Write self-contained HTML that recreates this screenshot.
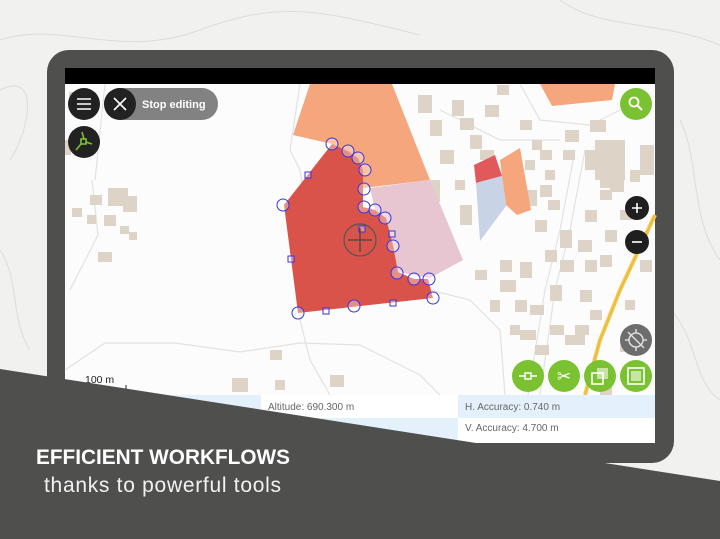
<!DOCTYPE html>
<html><head><meta charset="utf-8"><style>
html,body{margin:0;padding:0;width:720px;height:539px;overflow:hidden;background:#efefef;font-family:"Liberation Sans",sans-serif}
</style></head><body>
<svg width="720" height="539" viewBox="0 0 720 539" xmlns="http://www.w3.org/2000/svg" style="position:absolute;left:0;top:0">
<rect width="720" height="539" fill="#f1f1f0"/>
<g fill="none" stroke="#dcdcdc" stroke-width="1">
<path d="M0 40 C60 20 120 60 200 30 S320 10 420 35"/>
<path d="M0 90 C40 70 30 130 10 160"/>
<path d="M560 0 C600 30 660 20 720 45"/>
<path d="M680 120 C700 160 690 220 720 260"/>
<path d="M0 250 C20 280 10 320 30 350"/>
<path d="M660 300 C700 330 690 380 720 400"/>
</g>
<rect x="47" y="50" width="627" height="413" rx="22" fill="#4f4f4e"/>
<rect x="65" y="68" width="590" height="375" fill="#fcfcfc"/>
<rect x="65" y="68" width="590" height="16" fill="#000"/>
<g fill="none" stroke="#e2e2e2" stroke-width="1.2">
<path d="M92 180 L98 235 L70 290"/><path d="M105 84 L95 180"/>
<path d="M65 370 L105 343 L175 343 L240 352 L300 343 L360 345 L420 375 L440 395"/>
<path d="M300 84 L290 150 L300 170 L310 230 L300 320 L310 360 L330 395"/>
<path d="M520 84 L540 120 L590 125 L620 110"/><path d="M585 150 L570 230 L555 290 L540 395"/>
<path d="M575 150 L560 230 L545 290 L528 395"/>
<path d="M440 110 L500 140 L560 140"/><path d="M430 290 L470 300 L500 330 L505 395"/>
</g>
<path d="M655 215 L620 290 L600 340 L585 395" stroke="#f2c94c" stroke-width="4" fill="none"/>
<path d="M655 215 L620 290 L600 340 L585 395" stroke="#e8b53a" stroke-width="1" fill="none"/>
<g fill="#ddd4c7">
<rect x="108" y="188" width="20" height="18"/><rect x="123" y="196" width="14" height="16"/><rect x="90" y="195" width="12" height="10"/><rect x="72" y="208" width="10" height="9"/><rect x="87" y="215" width="9" height="9"/><rect x="104" y="215" width="12" height="11"/><rect x="120" y="226" width="9" height="8"/><rect x="129" y="232" width="8" height="8"/><rect x="98" y="252" width="14" height="10"/><rect x="69" y="92" width="12" height="10"/><rect x="65" y="140" width="6" height="15"/>
<rect x="418" y="95" width="14" height="18"/><rect x="430" y="120" width="12" height="16"/><rect x="452" y="100" width="12" height="16"/><rect x="460" y="118" width="14" height="12"/><rect x="470" y="135" width="12" height="14"/><rect x="440" y="150" width="14" height="14"/><rect x="455" y="180" width="10" height="10"/><rect x="430" y="180" width="10" height="22"/><rect x="460" y="205" width="12" height="20"/><rect x="485" y="105" width="14" height="12"/><rect x="497" y="85" width="12" height="10"/><rect x="480" y="150" width="14" height="10"/>
<rect x="520" y="120" width="12" height="10"/><rect x="532" y="140" width="10" height="10"/><rect x="525" y="160" width="10" height="10"/><rect x="525" y="190" width="12" height="16"/><rect x="540" y="150" width="12" height="10"/><rect x="545" y="170" width="10" height="10"/><rect x="540" y="185" width="12" height="12"/><rect x="548" y="200" width="12" height="10"/><rect x="535" y="220" width="12" height="12"/><rect x="560" y="230" width="12" height="18"/><rect x="545" y="250" width="12" height="12"/><rect x="520" y="262" width="12" height="16"/><rect x="550" y="285" width="12" height="16"/><rect x="560" y="260" width="14" height="12"/><rect x="565" y="130" width="14" height="12"/><rect x="590" y="120" width="16" height="12"/><rect x="563" y="150" width="12" height="10"/><rect x="585" y="150" width="14" height="20"/><rect x="595" y="140" width="30" height="40"/><rect x="600" y="170" width="20" height="18"/><rect x="600" y="190" width="12" height="10"/><rect x="610" y="180" width="14" height="12"/><rect x="630" y="170" width="10" height="12"/><rect x="640" y="145" width="14" height="30"/><rect x="620" y="210" width="12" height="10"/><rect x="605" y="230" width="12" height="12"/><rect x="585" y="210" width="12" height="12"/><rect x="578" y="240" width="14" height="12"/><rect x="585" y="260" width="12" height="12"/><rect x="600" y="255" width="12" height="12"/><rect x="580" y="290" width="12" height="12"/><rect x="590" y="310" width="12" height="10"/><rect x="575" y="325" width="14" height="10"/><rect x="565" y="335" width="20" height="10"/><rect x="550" y="325" width="14" height="10"/><rect x="530" y="305" width="14" height="10"/><rect x="515" y="300" width="12" height="12"/><rect x="510" y="325" width="10" height="10"/><rect x="520" y="330" width="16" height="10"/><rect x="535" y="345" width="14" height="10"/><rect x="500" y="260" width="12" height="12"/><rect x="500" y="280" width="16" height="12"/><rect x="490" y="300" width="10" height="12"/><rect x="475" y="270" width="12" height="10"/><rect x="620" y="340" width="12" height="12"/><rect x="625" y="300" width="10" height="10"/><rect x="640" y="260" width="12" height="12"/><rect x="270" y="350" width="12" height="10"/><rect x="275" y="380" width="10" height="10"/><rect x="330" y="375" width="14" height="12"/><rect x="232" y="378" width="16" height="14"/><rect x="600" y="385" width="12" height="10"/><rect x="625" y="372" width="14" height="12"/>
</g>
<polygon points="310,84 392,84 430,180 363,188 363,170 358,158 348,151 332,144 293,135" fill="#f5a67c"/>
<polygon points="540,84 615,84 612,100 552,106" fill="#f5a67c"/>
<polygon points="370,188 430,180 463,260 430,278 398,272 393,245 386,218 375,210" fill="#e7c6d1"/>
<polygon points="474,165 495,155 502,176 476,183" fill="#e2595c"/>
<polygon points="476,183 502,176 506,206 480,241" fill="#c9d3e6"/>
<polygon points="500,160 520,148 531,210 517,215 506,205 502,176" fill="#f5a67c"/>
<polygon points="332,144 348,151 358,158 363,170 363,188 363,207 375,210 386,218 393,245 398,272 414,279 428,279 433,298 298,313 284,205" fill="#d9534a"/>
<g fill="rgba(255,255,255,0.35)" stroke="#3535e0" stroke-width="1">
<circle cx="332" cy="144" r="6"/><circle cx="348" cy="151" r="6"/><circle cx="358" cy="158" r="6"/><circle cx="365" cy="170" r="6"/><circle cx="364" cy="189" r="6"/><circle cx="364" cy="207" r="6"/><circle cx="375" cy="210" r="6"/><circle cx="385" cy="218" r="6"/><circle cx="393" cy="246" r="6"/><circle cx="397" cy="273" r="6"/><circle cx="414" cy="279" r="6"/><circle cx="429" cy="279" r="6"/><circle cx="433" cy="298" r="6"/><circle cx="354" cy="306" r="6"/><circle cx="298" cy="313" r="6"/><circle cx="283" cy="205" r="6"/>
<rect x="305" y="172" width="6" height="6"/><rect x="288" y="256" width="6" height="6"/><rect x="323" y="308" width="6" height="6"/><rect x="390" y="300" width="6" height="6"/><rect x="389" y="231" width="6" height="6"/><rect x="359" y="226" width="6" height="6"/></g>
<circle cx="360" cy="240" r="16" fill="none" stroke="#555" stroke-width="1.2"/>
<path d="M348 240 H372 M360 228 V252" stroke="#444" stroke-width="1.2"/>
<rect x="104" y="88" width="114" height="32" rx="16" fill="#828282"/>
<circle cx="120" cy="104" r="16" fill="#222"/>
<path d="M114 98 L126 110 M126 98 L114 110" stroke="#fff" stroke-width="1.6"/>
<text x="142" y="108" font-size="11" font-weight="bold" fill="#fff">Stop editing</text>
<circle cx="84" cy="104" r="16" fill="#222"/>
<path d="M77 99 H91 M77 104 H91 M77 109 H91" stroke="#fff" stroke-width="1.6"/>
<circle cx="84" cy="142" r="16" fill="#222"/>
<g stroke="#7ac231" stroke-width="1.6" fill="none"><rect x="81" y="139" width="5" height="5"/><path d="M84 139 L82 132 M86 142 L92 144 M81 144 L76 150"/></g>
<circle cx="636" cy="104" r="16" fill="#7ac231"/>
<circle cx="634" cy="102" r="4.5" fill="none" stroke="#fff" stroke-width="1.8"/><path d="M637 105 L642 110" stroke="#fff" stroke-width="2"/>
<circle cx="637" cy="208" r="12" fill="#1f1f1f"/><path d="M632 208 H642 M637 203 V213" stroke="#fff" stroke-width="1.6"/>
<circle cx="637" cy="242" r="12" fill="#1f1f1f"/><path d="M632 242 H642" stroke="#fff" stroke-width="1.6"/>
<circle cx="636" cy="340" r="16" fill="#6d6d6d"/>
<circle cx="636" cy="340" r="7" fill="none" stroke="#ddd" stroke-width="1.5"/><path d="M628 332 L644 348 M636 329 V333 M636 347 V351 M625 340 H629 M643 340 H647" stroke="#ddd" stroke-width="1.5"/>
<g fill="#7ac231"><circle cx="528" cy="376" r="16"/><circle cx="564" cy="376" r="16"/><circle cx="600" cy="376" r="16"/><circle cx="636" cy="376" r="16"/></g>
<path d="M519 376 H537" stroke="#fff" stroke-width="1.6"/><rect x="525" y="373" width="6" height="6" fill="#7ac231" stroke="#fff" stroke-width="1.5"/>
<text x="564" y="382" font-size="17" fill="#fff" text-anchor="middle">✂</text>
<rect x="597" y="368" width="11" height="11" fill="#c7e3a6"/><rect x="592" y="373" width="11" height="11" fill="none" stroke="#fff" stroke-width="1.6"/>
<rect x="628" y="368" width="16" height="16" fill="none" stroke="#fff" stroke-width="1.6"/><rect x="631" y="371" width="10" height="10" fill="#c7e3a6"/>
<text x="85" y="383" font-size="10.5" fill="#222">100 m</text>
<path d="M126 385 V392" stroke="#222"/>
<rect x="65" y="395" width="590" height="48" fill="#fff"/>
<rect x="65" y="395" width="196" height="48" fill="#e4f0fb"/>
<rect x="261" y="418" width="197" height="24" fill="#e4f0fb"/>
<rect x="458" y="395" width="197" height="23" fill="#e4f0fb"/>
<text x="268" y="410" font-size="10" fill="#666">Altitude: 690.300 m</text>
<text x="465" y="410" font-size="10" fill="#666">H. Accuracy: 0.740 m</text>
<text x="465" y="431" font-size="10" fill="#666">V. Accuracy: 4.700 m</text>
<polygon points="0,369 720,481 720,539 0,539" fill="#4f4f4e"/>
<text x="36" y="464" font-size="21" font-weight="bold" fill="#fff" textLength="254" lengthAdjust="spacingAndGlyphs">EFFICIENT WORKFLOWS</text>
<text x="44" y="492" font-size="21" fill="#f2f2f2" textLength="237" lengthAdjust="spacing">thanks to powerful tools</text>
</svg>
</body></html>
